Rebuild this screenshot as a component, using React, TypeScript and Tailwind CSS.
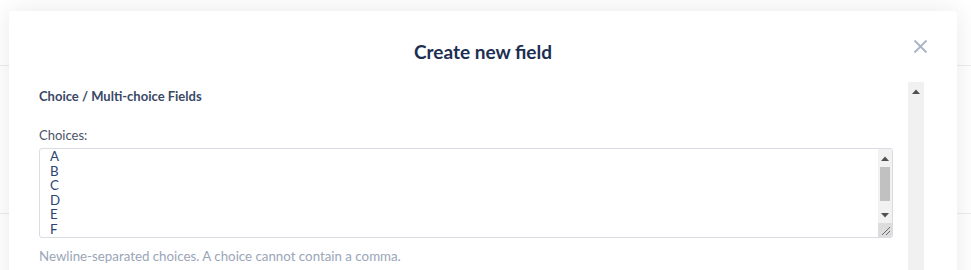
const CHOICES = ["A", "B", "C", "D", "E", "F", "G", "H"].join("\n");

function Arrow({ up }: { up?: boolean }) {
  return (
    <svg width="8" height="5" viewBox="0 0 8 5" className="block">
      <path d={up ? "M0 5L4 0.5L8 5Z" : "M0 0L4 4.5L8 0Z"} fill="#505050" />
    </svg>
  );
}

export default function App() {
  return (
    <div className="relative h-[270px] w-full overflow-hidden bg-white font-['Lato',sans-serif]">
      {/* page behind the dialog */}
      <div className="h-[66px] border-b border-[#ececec]" />
      <div className="h-[148px] border-b border-[#ececec]" />

      <div className="absolute top-[11px] left-[9px] flex h-[600px] w-[948px] flex-col rounded-[4px] bg-white shadow-[0_0_24px_rgba(0,0,0,0.09)]">
        <div className="relative flex h-[71px] shrink-0 items-center justify-center">
          <h2 className="m-0 pt-[11px] text-[19px] font-bold text-[#1c2e52]">Create new field</h2>
          <button
            type="button"
            className="absolute top-[28px] right-[29px] cursor-pointer border-none bg-transparent p-0 text-[#a9b4c6]"
            aria-label="Close"
          >
            <svg width="15" height="15" viewBox="0 0 15 15" fill="none">
              <path d="M1.5 1.5L13.5 13.5M13.5 1.5L1.5 13.5" stroke="currentColor" strokeWidth="1.8" />
            </svg>
          </button>
        </div>

        <div className="mr-[33px] ml-[16px] flex min-h-0 flex-1">
          <div className="min-w-0 flex-1 overflow-hidden pr-[15px] pl-[14px]">
            <div className="pt-[5px] text-[13px] font-bold text-[#3a4766]">Choice / Multi-choice Fields</div>
            <div className="mt-[19px] mb-[3px] text-[13px] text-[#4a5568]">Choices:</div>
            <div className="relative h-[90px] overflow-hidden rounded-[3px] border border-[#d9dce3]">
              <textarea
                className="block h-full w-full resize-none overflow-hidden border-none px-[10px] pt-0 text-[13.3px] leading-[14.6px] text-[#2b4470] outline-none"
                defaultValue={CHOICES}
              />
              {/* textarea scrollbar + resizer */}
              <div className="absolute top-0 right-0 bottom-0 flex w-[14px] flex-col bg-[#f1f1f1]">
                <div className="flex h-[15px] items-end justify-center pb-[3px]">
                  <Arrow up />
                </div>
                <div className="mx-[2px] mt-[3px] h-[36px] bg-[#c1c1c1]" />
                <div className="flex h-[22px] items-center justify-center pt-[8px]">
                  <Arrow />
                </div>
                <div className="mt-auto flex h-[15px] items-end justify-end bg-[#dcdcdc] pr-[1px] pb-[1px]">
                  <svg width="10" height="10" viewBox="0 0 10 10">
                    <path d="M1 9L9 1M5 9L9 5" stroke="#6b6b6b" strokeWidth="1" />
                  </svg>
                </div>
              </div>
            </div>
            <div className="mt-[9px] text-[13.3px] text-[#9aa5b8]">
              Newline-separated choices. A choice cannot contain a comma.
            </div>
          </div>
          {/* dialog body scrollbar */}
          <div className="w-[16px] shrink-0 bg-[#f1f1f1]">
            <div className="flex h-[12px] items-end justify-center">
              <Arrow up />
            </div>
          </div>
        </div>
      </div>
    </div>
  );
}
